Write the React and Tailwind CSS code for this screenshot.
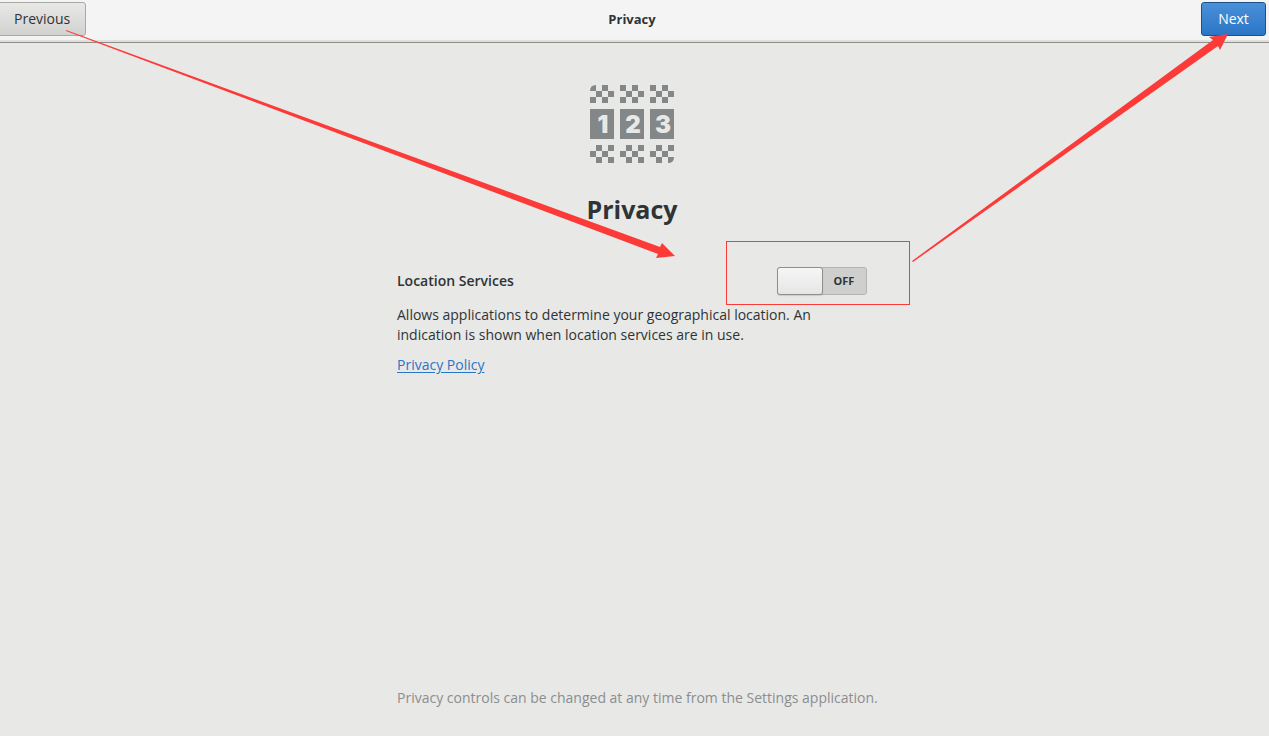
import React, { useState } from "react";

const topCells = [
  [0, 0], [12, 0],
  [6, 6], [18, 6],
  [0, 12], [12, 12],
];

const bottomCells = [
  [6, 0], [18, 0],
  [0, 6], [12, 6],
  [6, 12], [18, 12],
];

const TumblerIcon = () => {
  return (
    <svg
      width="84"
      height="78"
      viewBox="0 0 84 78"
      fill="#838787"
      aria-hidden="true"
    >
      <clipPath id="corners">
        <path d="M6 0H84V72Q84 78 78 78H0V6Q0 0 6 0Z" />
      </clipPath>
      <g clipPath="url(#corners)" shapeRendering="crispEdges">
        {[0, 30, 60].map((x, index) => (
          <g key={x} transform={`translate(${x} 0)`}>
            {topCells.map(([cx, cy]) => (
              <rect key={`t${cx}-${cy}`} x={cx} y={cy} width="6" height="6" />
            ))}
            <rect x="0" y="24" width="24" height="30" />
            {bottomCells.map(([cx, cy]) => (
              <rect
                key={`b${cx}-${cy}`}
                x={cx}
                y={cy + 60}
                width="6"
                height="6"
              />
            ))}
            <text
              x="13"
              y="48"
              textAnchor="middle"
              fill="#e8e8e6"
              className="font-['Inter'] text-[24px] font-black"
            >
              {index + 1}
            </text>
          </g>
        ))}
      </g>
    </svg>
  );
};

const Arrows = () => {
  return (
    <svg
      className="pointer-events-none absolute top-0 left-0"
      width="1269"
      height="300"
      fill="#fc3a38"
      aria-hidden="true"
    >
      <path d="M66 30L660 247L662 243L675 256L656 258L658 254L66 31Z" />
      <path d="M912 261L1213 40L1209 37L1228 34L1220 50L1218 46L913 262Z" />
    </svg>
  );
};

const Switch = ({ id, checked, onChange }) => {
  return (
    <label
      htmlFor={id}
      className={`flex h-7 w-[90px] rounded-[3px] border border-[#b4b4b2] bg-[#cfcfcd] text-[11px] font-bold ${
        checked && "flex-row-reverse"
      }`}
    >
      <input
        id={id}
        type="checkbox"
        role="switch"
        aria-label="Location Services"
        checked={checked}
        onChange={onChange}
        className="-m-px h-7 w-[46px] appearance-none rounded-[3px] border border-[#8f908c] bg-linear-to-b from-[#f6f6f6] to-[#e6e6e5] shadow-[0_1px_1px_#0000001f]"
      />
      <span className="flex flex-1 items-center justify-center">
        {checked ? "ON" : "OFF"}
      </span>
    </label>
  );
};

const App = () => {
  const [location, setLocation] = useState(false);

  return (
    <div className="relative flex min-h-screen flex-col overflow-hidden bg-[#e8e8e6] font-['Open_Sans',sans-serif] text-[14px] leading-5 text-[#2e3436]">
      <header className="-ml-0.5 grid h-[43px] grid-cols-[1fr_auto_1fr] items-start border-b border-[#8f8f89] bg-[#f4f4f4] pt-0.5 pr-[3px] shadow-[inset_0_-2px_1px_#dededc]">
        <button className="h-[34px] justify-self-start rounded-[3px] border border-[#a8a8a5] bg-linear-to-b from-[#e8e8e7] to-[#d2d2d0] px-[15px]">
          Previous
        </button>
        <h2 className="pt-[7px] text-[13px] font-bold">Privacy</h2>
        <button className="h-[34px] w-[65px] justify-self-end rounded-[3px] border border-[#1c5187] bg-linear-to-b from-[#4a90d9] to-[#2a76c6] text-white">
          Next
        </button>
      </header>

      <main className="flex flex-1 flex-col items-center pt-[42px] pr-[5px]">
        <TumblerIcon />
        <h1 className="mt-[30px] text-[25px] leading-8 font-bold">Privacy</h1>

        <section className="mt-[42px] w-full max-w-[470px]">
          <div className="flex h-7 items-center justify-between">
            <h3 className="font-semibold">Location Services</h3>
            <div className="relative">
              <Switch
                id="location"
                checked={location}
                onChange={(e) => setLocation(e.target.checked)}
              />
              <div className="pointer-events-none absolute -top-[26px] -right-[43px] h-16 w-[184px] border border-[#fc3a38]"></div>
            </div>
          </div>
          <p className="mt-[10px] max-w-[420px]">
            Allows applications to determine your geographical location. An
            indication is shown when location services are in use.
          </p>
          <a
            href="#privacy-policy"
            className="mt-[10px] inline-block text-[#2a76c6] underline underline-offset-2"
          >
            Privacy Policy
          </a>
        </section>

        <footer className="mt-auto w-full max-w-[470px] pb-7 whitespace-nowrap text-[#8b8e8f]">
          Privacy controls can be changed at any time from the Settings
          application.
        </footer>
      </main>

      <Arrows />
    </div>
  );
};

export default App;
